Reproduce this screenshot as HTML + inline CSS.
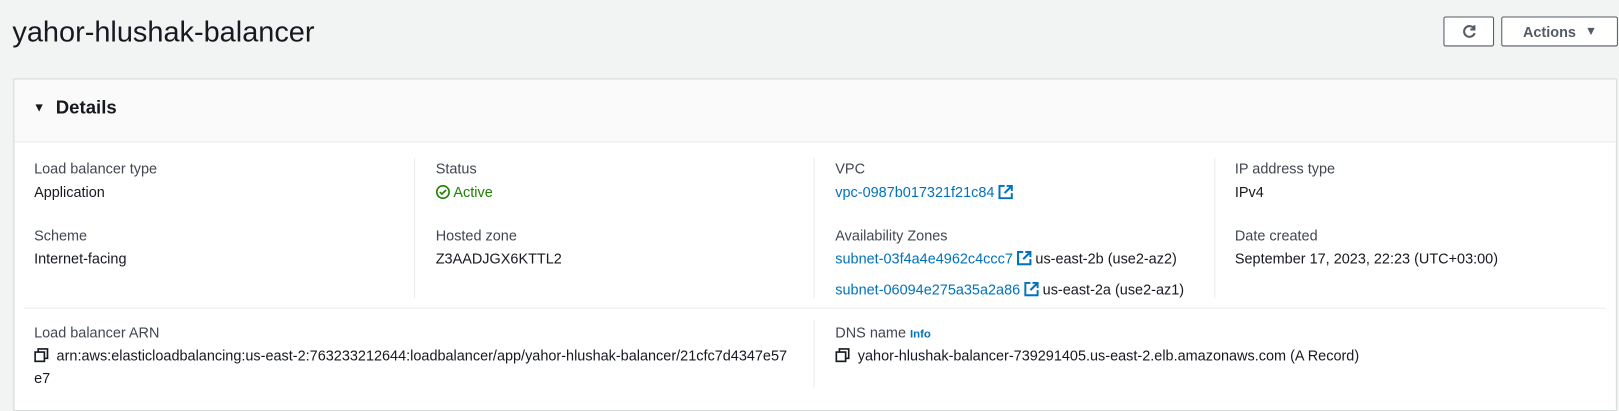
<!DOCTYPE html>
<html><head><style>
html,body{margin:0;width:1619px;height:409px;background:#f2f3f3;overflow:hidden}
#w{position:absolute;left:0;top:0;width:1568px;height:396px;transform:scale(1.0325);transform-origin:0 0;font-family:"Liberation Sans",Arial,sans-serif;color:#16191f;font-size:14px}
.a{position:absolute;white-space:nowrap}
h1{position:absolute;left:12px;top:15px;margin:0;font-size:28px;font-weight:normal;color:#16191f}
.btn{position:absolute;top:16px;height:29px;border:1px solid #545b64;border-radius:2px;background:#fff;box-sizing:border-box}
.card{position:absolute;left:13px;top:76px;width:1553px;height:322px;background:#fff;border:1px solid #d5dbdb;box-sizing:border-box;box-shadow:0 1px 1px rgba(0,28,36,.2)}
.hd{position:absolute;left:0;top:0;right:0;height:60px;background:#fafafa;border-bottom:1px solid #eaeded}
.l{color:#414750}
.lnk{color:#0073bb}
.v{position:absolute;width:1px;background:#eaeded}
</style></head><body><div id="w">
<h1>yahor-hlushak-balancer</h1>
<div class="btn" style="left:1398px;width:49px"><svg style="position:absolute;left:16px;top:6px" width="16" height="16" viewBox="0 0 16 16"><path d="M12.5 4.5A5.2 5.2 0 1 0 13.2 9" fill="none" stroke="#545b64" stroke-width="2"/><path d="M13 1.5V5.5H9" fill="none" stroke="#545b64" stroke-width="2"/></svg></div>
<div class="btn" style="left:1454px;width:113px"><span class="a" style="left:20px;top:6px;font-weight:bold;color:#545b64">Actions</span><span class="a" style="left:80px;top:6px;font-size:12px;color:#545b64">&#9660;</span></div>
<div class="card">
<div class="hd"><span class="a" style="left:18px;top:20px;font-size:12px">&#9660;</span><span class="a" style="left:40px;top:17px;font-size:18px;font-weight:bold">Details</span></div>
</div>
<div class="v" style="left:401px;top:153px;height:136px"></div>
<div class="v" style="left:788px;top:153px;height:136px"></div>
<div class="v" style="left:1176px;top:153px;height:136px"></div>
<div class="a" style="left:23px;top:298px;width:1532px;height:1px;background:#eaeded"></div>
<div class="v" style="left:788px;top:310px;height:66px"></div>
<div class="a l" style="left:33px;top:155px">Load balancer type</div>
<div class="a" style="left:33px;top:178px">Application</div>
<div class="a l" style="left:33px;top:220px">Scheme</div>
<div class="a" style="left:33px;top:242px">Internet-facing</div>
<div class="a l" style="left:422px;top:155px">Status</div>
<div class="a" style="left:422px;top:178px;color:#1d8102"><svg width="14" height="14" viewBox="0 0 14 14" style="vertical-align:-2px"><circle cx="7" cy="7" r="6" fill="none" stroke="#1d8102" stroke-width="1.6"/><path d="M4 7l2 2 4-4" fill="none" stroke="#1d8102" stroke-width="1.6"/></svg> Active</div>
<div class="a l" style="left:422px;top:220px">Hosted zone</div>
<div class="a" style="left:422px;top:242px">Z3AADJGX6KTTL2</div>
<div class="a l" style="left:809px;top:155px">VPC</div>
<div class="a lnk" style="left:809px;top:178px">vpc-0987b017321f21c84 <svg width="14" height="14" viewBox="0 0 14 14" style="vertical-align:-2px"><path d="M6 1H1v12h12V8M8 1h5v5M13 1L6 8" fill="none" stroke="#0073bb" stroke-width="2"/></svg></div>
<div class="a l" style="left:809px;top:220px">Availability Zones</div>
<div class="a" style="left:809px;top:242px"><span class="lnk">subnet-03f4a4e4962c4ccc7 <svg width="14" height="14" viewBox="0 0 14 14" style="vertical-align:-2px"><path d="M6 1H1v12h12V8M8 1h5v5M13 1L6 8" fill="none" stroke="#0073bb" stroke-width="2"/></svg></span> us-east-2b (use2-az2)</div>
<div class="a" style="left:809px;top:272px"><span class="lnk">subnet-06094e275a35a2a86 <svg width="14" height="14" viewBox="0 0 14 14" style="vertical-align:-2px"><path d="M6 1H1v12h12V8M8 1h5v5M13 1L6 8" fill="none" stroke="#0073bb" stroke-width="2"/></svg></span> us-east-2a (use2-az1)</div>
<div class="a l" style="left:1196px;top:155px">IP address type</div>
<div class="a" style="left:1196px;top:178px">IPv4</div>
<div class="a l" style="left:1196px;top:220px">Date created</div>
<div class="a" style="left:1196px;top:242px">September 17, 2023, 22:23 (UTC+03:00)</div>
<div class="a l" style="left:33px;top:314px">Load balancer ARN</div>
<div class="a" style="left:33px;top:336px"><svg width="14" height="14" viewBox="0 0 14 14" style="vertical-align:-2px"><path d="M4 4V1h9v9h-3M1 4h9v9H1z" fill="none" stroke="#16191f" stroke-width="1.6"/></svg>&nbsp; arn:aws:elasticloadbalancing:us-east-2:763233212644:loadbalancer/app/yahor-hlushak-balancer/21cfc7d4347e57</div>
<div class="a" style="left:33px;top:358px">e7</div>
<div class="a l" style="left:809px;top:314px">DNS name <span style="color:#0073bb;font-size:11px;font-weight:bold">Info</span></div>
<div class="a" style="left:809px;top:336px"><svg width="14" height="14" viewBox="0 0 14 14" style="vertical-align:-2px"><path d="M4 4V1h9v9h-3M1 4h9v9H1z" fill="none" stroke="#16191f" stroke-width="1.6"/></svg>&nbsp; yahor-hlushak-balancer-739291405.us-east-2.elb.amazonaws.com (A Record)</div>
</div></body></html>
